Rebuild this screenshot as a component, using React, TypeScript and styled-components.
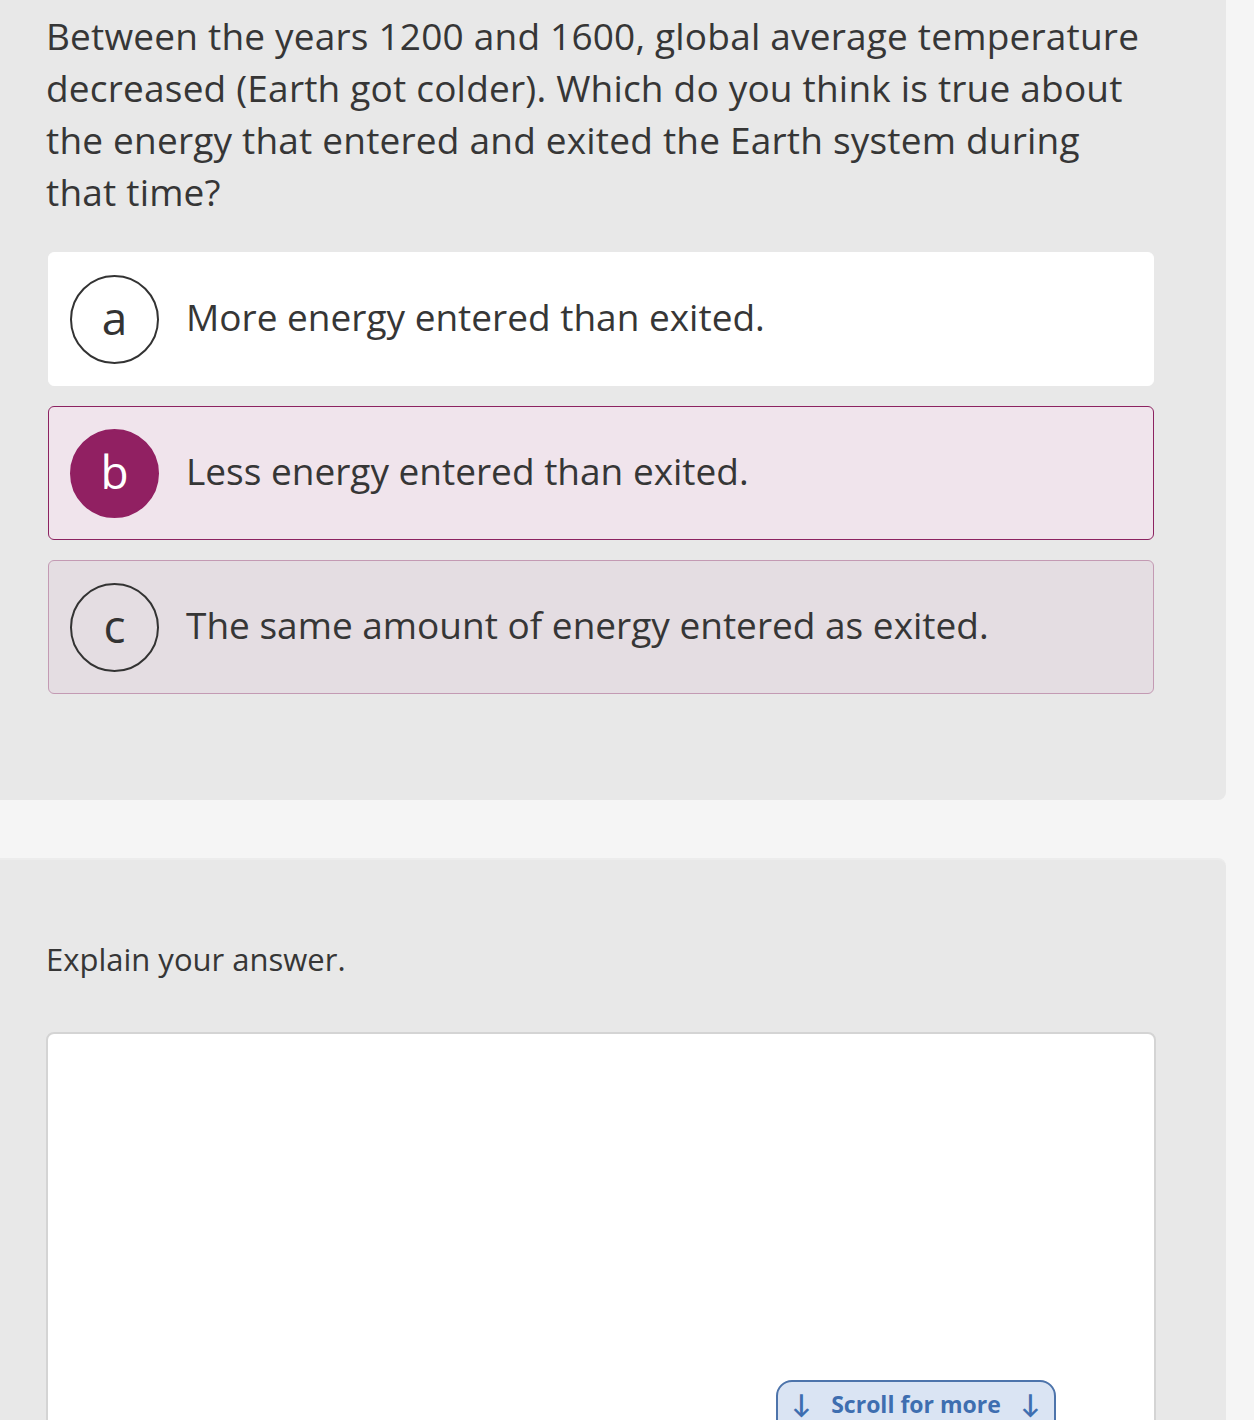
import React from "react";
import styled, { createGlobalStyle } from "styled-components";

const GlobalStyle = createGlobalStyle`
  html, body {
    margin: 0;
    padding: 0;
    background: #f5f5f5;
    font-family: "Open Sans", Lato, sans-serif;
    color: #363636;
  }
`;

const Page = styled.div`
  width: 1254px;
  height: 1420px;
  overflow: hidden;
  position: relative;
  display: flex;
  flex-direction: column;
  gap: 58px;
`;

const Panel = styled.section<{ $top?: boolean }>`
  width: 1226px;
  box-sizing: border-box;
  background: #e8e8e8;
  border-radius: ${(p) => (p.$top ? "0 0 8px 0" : "0 8px 0 0")};
  border-top: ${(p) => (p.$top ? "none" : "2px solid #ececec")};
  padding: ${(p) => (p.$top ? "10px 72px 106px 46px" : "75px 70px 0 46px")};
  ${(p) => (p.$top ? "" : "min-height: 700px;")}
`;

const Question = styled.p`
  margin: 0 0 34px;
  font-size: 37px;
  letter-spacing: 0.2px;
  line-height: 52px;
`;

const Options = styled.div`
  display: flex;
  flex-direction: column;
  gap: 20px;
  padding-left: 2px;
`;

type Variant = "plain" | "selected" | "hover";

const Option = styled.div<{ $variant: Variant }>`
  display: flex;
  align-items: center;
  gap: 27px;
  height: 134px;
  box-sizing: border-box;
  padding: 0 21px;
  border-radius: 6px;
  border: 1px solid
    ${(p) =>
      p.$variant === "selected" ? "#8c2361" : p.$variant === "hover" ? "#c39ab3" : "#ffffff"};
  background: ${(p) =>
    p.$variant === "selected" ? "#f0e4ec" : p.$variant === "hover" ? "#e4dde2" : "#ffffff"};
`;

const Bubble = styled.div<{ $variant: Variant }>`
  width: 89px;
  height: 89px;
  flex: none;
  box-sizing: border-box;
  border-radius: 50%;
  display: flex;
  align-items: center;
  justify-content: center;
  font-size: 46px;
  line-height: 1;
  padding-bottom: 4px;
  border: 2px solid ${(p) => (p.$variant === "selected" ? "#912062" : "#333333")};
  background: ${(p) =>
    p.$variant === "selected" ? "#912062" : p.$variant === "hover" ? "#e4dde2" : "#ffffff"};
  color: ${(p) => (p.$variant === "selected" ? "#ffffff" : "#333333")};
`;

const OptionText = styled.span`
  font-size: 37px;
  margin-top: -6px;
`;

const Prompt = styled.p`
  margin: 0 0 49px;
  font-size: 31px;
  line-height: 48px;
`;

const Answer = styled.div`
  width: 1110px;
  height: 600px;
  box-sizing: border-box;
  background: #ffffff;
  border: 2px solid #d4d4d4;
  border-radius: 8px;
`;

const ScrollHint = styled.div`
  position: absolute;
  left: 776px;
  top: 1380px;
  width: 280px;
  height: 60px;
  box-sizing: border-box;
  background: #dae4f3;
  border: 2px solid #4d74ab;
  border-radius: 16px;
  display: flex;
  justify-content: center;
  gap: 20px;
  padding-top: 6px;
  color: #3e6eb0;
  font-size: 23px;
  font-weight: 700;
`;

const Arrow = styled.span`
  font-size: 26px;
  line-height: 30px;
`;

const options: { letter: string; text: string; variant: Variant }[] = [
  { letter: "a", text: "More energy entered than exited.", variant: "plain" },
  { letter: "b", text: "Less energy entered than exited.", variant: "selected" },
  { letter: "c", text: "The same amount of energy entered as exited.", variant: "hover" },
];

export default function App() {
  return (
    <Page>
      <GlobalStyle />
      <Panel $top>
        <Question>
          Between the years 1200 and 1600, global average temperature decreased (Earth got
          colder). Which do you think is true about the energy that entered and exited the Earth
          system during that time?
        </Question>
        <Options>
          {options.map((o) => (
            <Option key={o.letter} $variant={o.variant}>
              <Bubble $variant={o.variant}>{o.letter}</Bubble>
              <OptionText>{o.text}</OptionText>
            </Option>
          ))}
        </Options>
      </Panel>
      <Panel>
        <Prompt>Explain your answer.</Prompt>
        <Answer />
      </Panel>
      <ScrollHint>
        <Arrow>↓</Arrow>
        <span>Scroll for more</span>
        <Arrow>↓</Arrow>
      </ScrollHint>
    </Page>
  );
}
